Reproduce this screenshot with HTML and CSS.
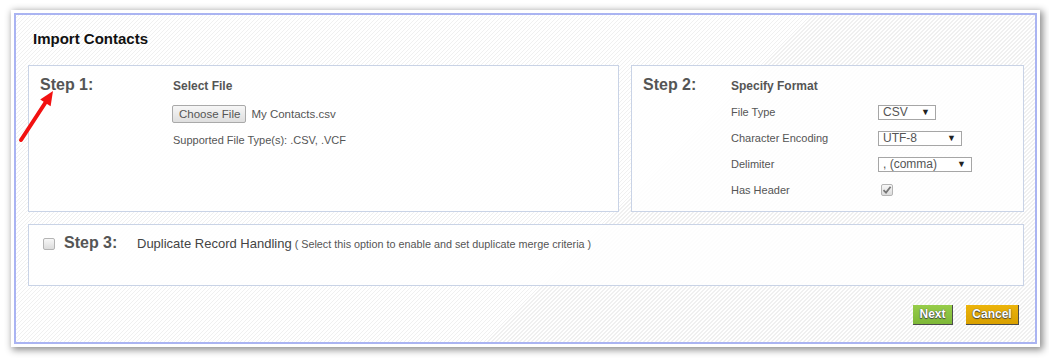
FILE: index.html
```html
<!DOCTYPE html>
<html lang="en">
  <head>
    <meta charset="UTF-8" />
    <meta name="viewport" content="width=device-width, initial-scale=1.0" />
    <title>Import Contacts</title>
    <link rel="stylesheet" href="styles.css">
  </head>
  <body>
    <div class="frame">
      <div class="dialog">
        <h1 class="dialog-title">Import Contacts</h1>

        <div class="step-row">
          <div class="panel panel-file">
            <div class="step-label">Step 1:</div>
            <div class="step-content">
              <div class="section-title">Select File</div>
              <div class="file-row">
                <span class="file-button">Choose File</span>
                <span class="file-name">My Contacts.csv</span>
              </div>
              <div class="hint">Supported File Type(s): .CSV, .VCF</div>
            </div>
          </div>

          <div class="panel panel-format">
            <div class="step-label">Step 2:</div>
            <div class="step-content">
              <div class="section-title">Specify Format</div>
              <div class="form-rows">
                <div class="form-row">
                  <span class="form-label">File Type</span>
                  <span class="select select-type">CSV<span class="select-arrow">&#9660;</span></span>
                </div>
                <div class="form-row">
                  <span class="form-label">Character Encoding</span>
                  <span class="select select-encoding">UTF-8<span class="select-arrow">&#9660;</span></span>
                </div>
                <div class="form-row">
                  <span class="form-label">Delimiter</span>
                  <span class="select select-delimiter">, (comma)<span class="select-arrow">&#9660;</span></span>
                </div>
                <div class="form-row">
                  <span class="form-label">Has Header</span>
                  <span class="checkbox checkbox-checked">
                    <svg width="10" height="10" viewBox="0 0 10 10">
                      <path d="M1.5 5.2 L4 7.6 L8.6 1.8" fill="none" stroke="#777" stroke-width="1.8" />
                    </svg>
                  </span>
                </div>
              </div>
            </div>
          </div>
        </div>

        <div class="panel panel-duplicate">
          <span class="checkbox"></span>
          <div class="step-label">Step 3:</div>
          <div class="duplicate-title">Duplicate Record Handling</div>
          <div class="duplicate-note">( Select this option to enable and set duplicate merge criteria )</div>
        </div>

        <div class="dialog-footer">
          <span class="btn btn-next">Next</span>
          <span class="btn btn-cancel">Cancel</span>
        </div>
      </div>
    </div>

    <svg class="annotation" width="1049" height="358" viewBox="0 0 1049 358">
      <line x1="21" y1="140" x2="45.5" y2="102.5" stroke="#f21111" stroke-width="4" stroke-linecap="round" />
      <polygon points="53,91 50.6,106.2 40.2,99.4" fill="#f21111" />
    </svg>
  </body>
</html>
```

FILE: styles.css
```css
body {
  margin: 0;
  width: 1049px;
  height: 358px;
  overflow: hidden;
  background: #fff;
  font-family: "Liberation Sans", Arial, sans-serif;
  color: #555;
  position: relative;
}

/* outer white card with shadow */
.frame {
  margin: 10px 0 0 11px;
  width: 1023px;
  padding: 3px;
  background: #fff;
  box-shadow: 2px 2px 7px 1px rgba(0, 0, 0, 0.45);
}

.dialog {
  border: 2px solid #aab4f2;
  height: 313px;
  padding: 14px 11px 0 12px;
  background: repeating-linear-gradient(
    135deg,
    #ffffff 0,
    #ffffff 1.5px,
    #f0f0f0 1.5px,
    #f0f0f0 2.828px
  );
}

.dialog-title {
  margin: 0;
  font-size: 15px;
  line-height: 20px;
  font-weight: bold;
  color: #111;
  padding-left: 5px;
}

.step-row {
  display: flex;
  gap: 12px;
  margin-top: 16px;
}

.panel {
  border: 1px solid #c9d3e6;
  background: rgba(255, 255, 255, 0.85);
  box-sizing: border-box;
}

.panel-file,
.panel-format {
  height: 147px;
  display: flex;
  align-items: baseline;
  padding: 9px 11px 0;
}
.panel-file {
  width: 591px;
}
.panel-format {
  width: 393px;
}

.step-label {
  font-size: 16px;
  line-height: 20px;
  font-weight: bold;
  color: #555;
  white-space: nowrap;
}
.panel-file .step-label {
  width: 133px;
}
.panel-format .step-label {
  width: 88px;
}

.section-title {
  font-size: 12px;
  line-height: 20px;
  font-weight: bold;
  color: #555;
}

.file-row {
  display: flex;
  align-items: center;
  margin-top: 9px;
  font-size: 12px;
}
.file-button {
  height: 18px;
  line-height: 16px;
  box-sizing: border-box;
  padding: 0 5px 0 6px;
  border: 1px solid #a9a9a9;
  border-radius: 2px;
  background: linear-gradient(#f6f6f6, #dedede);
  color: #555;
  font-size: 11.5px;
  margin-left: -1px;
}
.file-name {
  margin-left: 5px;
  font-size: 11.5px;
  color: #555;
}

.hint {
  margin-top: 9px;
  font-size: 11px;
  line-height: 16px;
}

.form-rows {
  margin-top: 3px;
}
.form-row {
  display: flex;
  align-items: center;
  height: 26px;
}
.form-label {
  width: 147px;
  font-size: 11px;
}

.select {
  position: relative;
  display: inline-block;
  height: 15px;
  line-height: 13px;
  box-sizing: border-box;
  border: 1px solid #a6a6a6;
  background: #fff;
  font-size: 12px;
  color: #555;
  padding-left: 4px;
}
.select-arrow {
  position: absolute;
  right: 5px;
  top: 0;
  font-size: 9px;
  color: #222;
}
.select-type {
  width: 58px;
}
.select-encoding {
  width: 84px;
}
.select-delimiter {
  width: 94px;
}

.checkbox {
  display: inline-flex;
  align-items: center;
  justify-content: center;
  width: 12px;
  height: 12px;
  box-sizing: border-box;
  border: 1px solid #b4b4b4;
  border-radius: 2px;
  background: linear-gradient(#f7f7f7, #dcdcdc);
}
.checkbox-checked {
  margin-left: 3px;
}

.panel-duplicate {
  margin-top: 12px;
  height: 62px;
  display: flex;
  align-items: baseline;
  padding: 8px 14px 0;
}
.panel-duplicate .checkbox {
  align-self: flex-start;
  margin-top: 5px;
  margin-right: 9px;
}
.panel-duplicate .step-label {
  width: 73px;
}
.duplicate-title {
  font-size: 13px;
  color: #444;
}
.duplicate-note {
  font-size: 10.8px;
  color: #555;
  margin-left: 3px;
}

.dialog-footer {
  display: flex;
  justify-content: flex-end;
  gap: 13px;
  margin-top: 19px;
  padding-right: 5px;
}

.btn {
  height: 20px;
  line-height: 19px;
  box-sizing: border-box;
  font-size: 12px;
  font-weight: bold;
  color: #fff;
  text-align: center;
  text-shadow: 0 0 1px #333, 0 1px 1px #444;
  border-right: 1px solid #4d4d4d;
  border-bottom: 1px solid #4d4d4d;
}
.btn-next {
  width: 40px;
  background: linear-gradient(#97cd4a, #7eb838);
}
.btn-cancel {
  width: 53px;
  background: linear-gradient(#ecb40a, #d9a000);
}

/* red pointer drawn over the screenshot */
.annotation {
  position: absolute;
  left: 0;
  top: 0;
  pointer-events: none;
}
```
